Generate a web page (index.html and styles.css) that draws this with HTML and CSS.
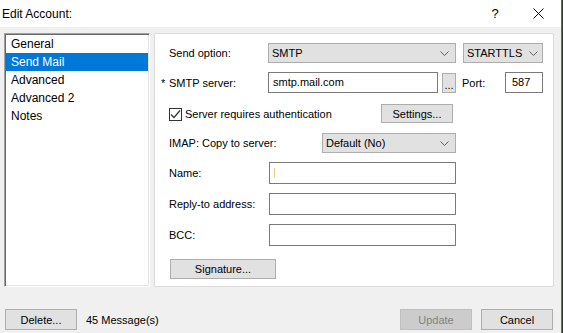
FILE: index.html
```html
<!DOCTYPE html>
<html lang="en">
<head>
    <meta charset="UTF-8">
    <title>Edit Account</title>
    <link rel="stylesheet" href="styles.css">
</head>
<body>
    <div class="window">
        <div class="titlebar">
            <span class="title">Edit Account:</span>
            <span class="help">?</span>
            <span class="close">
                <svg width="11" height="11" viewBox="0 0 11 11"><path d="M0.5 0.5L10.5 10.5M10.5 0.5L0.5 10.5" stroke="#000" stroke-width="1" fill="none"/></svg>
            </span>
        </div>

        <div class="content">
            <ul class="nav">
                <li>General</li>
                <li class="sel">Send Mail</li>
                <li>Advanced</li>
                <li>Advanced 2</li>
                <li>Notes</li>
            </ul>

            <div class="panel">
                <div class="row r-send">
                    <span class="lbl">Send option:</span>
                    <div class="combo c-smtp">
                        <span>SMTP</span>
                        <svg class="chev" width="9" height="5" viewBox="0 0 9 5"><path d="M0.5 0.5L4.5 4.5L8.5 0.5" stroke="#606060" fill="none"/></svg>
                    </div>
                    <div class="combo c-tls">
                        <span>STARTTLS</span>
                        <svg class="chev" width="9" height="5" viewBox="0 0 9 5"><path d="M0.5 0.5L4.5 4.5L8.5 0.5" stroke="#606060" fill="none"/></svg>
                    </div>
                </div>

                <div class="row r-server">
                    <span class="lbl"><span class="req">*</span>SMTP server:</span>
                    <div class="input i-server">smtp.mail.com</div>
                    <div class="btn b-dots">...</div>
                    <span class="port-lbl">Port:</span>
                    <div class="input i-port">587</div>
                </div>

                <div class="row r-auth">
                    <span class="check">
                        <svg width="11" height="11" viewBox="0 0 11 11"><path d="M1 5.5L4 8.5L10 1.5" stroke="#333" stroke-width="1.2" fill="none"/></svg>
                    </span>
                    <span class="check-lbl">Server requires authentication</span>
                    <div class="btn b-settings">Settings...</div>
                </div>

                <div class="row r-imap">
                    <span class="lbl">IMAP: Copy to server:</span>
                    <div class="combo c-imap">
                        <span>Default (No)</span>
                        <svg class="chev" width="9" height="5" viewBox="0 0 9 5"><path d="M0.5 0.5L4.5 4.5L8.5 0.5" stroke="#606060" fill="none"/></svg>
                    </div>
                </div>

                <div class="row r-field">
                    <span class="lbl">Name:</span>
                    <div class="input i-field"><span class="caret"></span></div>
                </div>

                <div class="row r-field">
                    <span class="lbl">Reply-to address:</span>
                    <div class="input i-field"></div>
                </div>

                <div class="row r-field">
                    <span class="lbl">BCC:</span>
                    <div class="input i-field"></div>
                </div>

                <div class="row r-sig">
                    <div class="btn b-sig">Signature...</div>
                </div>
            </div>
        </div>

        <div class="footer">
            <div class="btn b-foot">Delete...</div>
            <span class="count">45 Message(s)</span>
            <div class="btn b-foot disabled">Update</div>
            <div class="btn b-foot b-cancel">Cancel</div>
        </div>
    </div>
</body>
</html>
```

FILE: styles.css
```css
html, body {
    margin: 0;
    padding: 0;
}

body {
    width: 563px;
    height: 333px;
    background: #2f3a2c;
    font-family: "Liberation Sans", Arial, sans-serif;
    font-size: 11px;
    color: #000;
    overflow: hidden;
}

.window {
    width: 561px;
    height: 333px;
    background: #f0f0f0;
    border-right: 1px solid #6b6b6b;
    display: flex;
    flex-direction: column;
}

/* title bar */
.titlebar {
    height: 27px;
    background: #fff;
    display: flex;
    align-items: center;
    flex-shrink: 0;
}

.titlebar .title {
    margin-left: 2px;
    font-size: 12px;
    flex: 1;
}

.titlebar .help {
    font-size: 13px;
    width: 46px;
    text-align: center;
    margin-right: -3px;
}

.titlebar .close {
    width: 46px;
    display: flex;
    justify-content: center;
    margin-right: 0;
}

/* main area */
.content {
    display: flex;
    margin-top: 6px;
    padding-left: 4px;
    height: 254px;
}

.nav {
    margin: 0;
    padding: 1px;
    list-style: none;
    width: 142px;
    background: #fff;
    border-top: 1px solid #a0a0a0;
    border-left: 1px solid #a0a0a0;
    border-right: 1px solid #fff;
    border-bottom: 1px solid #fff;
    box-shadow: inset 1px 1px 0 #696969, inset -1px -1px 0 #e3e3e3;
}

.nav li {
    height: 18px;
    line-height: 18px;
    padding-left: 5px;
    font-size: 12px;
}

.nav li.sel {
    background: #0078d7;
    color: #fff;
}

.panel {
    margin-left: 4px;
    width: 400px;
    background: #fff;
    border: 1px solid #dcdcdc;
    padding: 9px 0 0 14px;
    box-sizing: border-box;
}

.row {
    display: flex;
    align-items: center;
}

.lbl {
    flex-shrink: 0;
    white-space: nowrap;
}

.req {
    display: inline-block;
    width: 8px;
}

.combo {
    height: 20px;
    box-sizing: border-box;
    background: #e1e1e1;
    border: 1px solid #adadad;
    display: flex;
    align-items: center;
    padding-left: 3px;
}

.combo .chev {
    margin-left: auto;
    margin-right: 6px;
}

.input {
    box-sizing: border-box;
    background: #fff;
    border: 1px solid #7a7a7a;
    display: flex;
    align-items: center;
    padding-bottom: 2px;
}

.btn {
    box-sizing: border-box;
    background: #e1e1e1;
    border: 1px solid #adadad;
    display: flex;
    align-items: center;
    justify-content: center;
}

/* row 1 */
.r-send {
    height: 20px;
}

.r-send .lbl {
    width: 99px;
}

.c-smtp {
    width: 188px;
}

.c-tls {
    width: 80px;
    margin-left: 7px;
}

.c-tls .chev {
    margin-right: 4px;
}

/* row 2 */
.r-server {
    height: 21px;
    margin-top: 9px;
}

.r-server .lbl {
    width: 107px;
    margin-left: -8px;
}

.i-server {
    width: 170px;
    height: 21px;
    padding-left: 4px;
}

.b-dots {
    width: 14px;
    height: 20px;
    margin-left: 4px;
    padding-top: 4px;
}

.port-lbl {
    margin-left: 6px;
    width: 43px;
}

.i-port {
    width: 38px;
    height: 21px;
    padding-left: 6px;
}

/* row 3 */
.r-auth {
    height: 19px;
    margin-top: 11px;
}

.check {
    width: 13px;
    height: 13px;
    box-sizing: border-box;
    border: 1px solid #333;
    background: #fff;
    display: flex;
    align-items: center;
    justify-content: center;
    margin-top: 2px;
}

.check-lbl {
    margin-left: 3px;
    width: 196px;
}

.b-settings {
    width: 72px;
    height: 19px;
}

/* row 4 */
.r-imap {
    height: 20px;
    margin-top: 10px;
}

.r-imap .lbl {
    width: 153px;
}

.c-imap {
    width: 134px;
}

/* text fields */
.r-field {
    height: 22px;
    margin-top: 9px;
}

.r-field .lbl {
    width: 100px;
}

.i-field {
    width: 187px;
    height: 22px;
    padding-left: 4px;
}

.caret {
    width: 1px;
    height: 10px;
    background: #f1cf7a;
    margin-top: 2px;
}

/* signature */
.r-sig {
    margin-top: 13px;
}

.b-sig {
    width: 106px;
    height: 20px;
    margin-left: 1px;
}

/* footer */
.footer {
    display: flex;
    align-items: center;
    padding: 22px 0 0 5px;
}

.b-foot {
    width: 72px;
    height: 21px;
}

.count {
    margin-left: 9px;
    flex: 1;
}

.b-foot.disabled {
    background: #cccccc;
    border-color: #bfbfbf;
    color: #838383;
}

.b-cancel {
    margin-left: 9px;
    margin-right: 8px;
}
```
